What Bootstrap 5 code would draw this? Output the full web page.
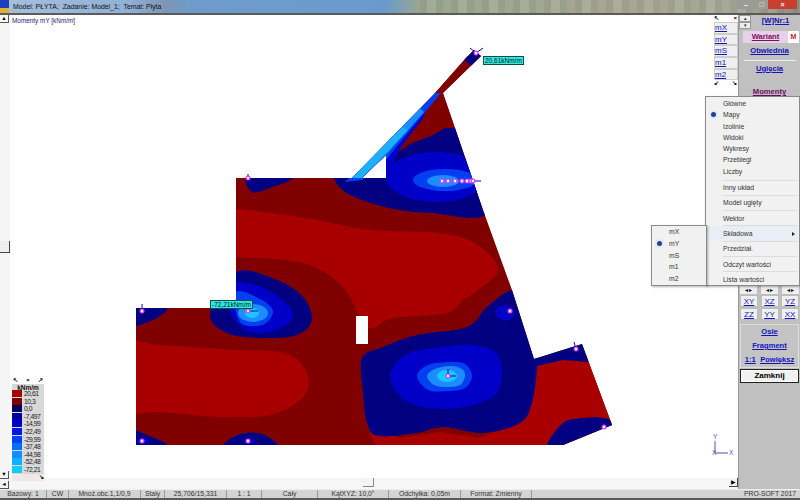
<!DOCTYPE html>
<html lang="en">
<head>
  <meta charset="UTF-8">
  <title>Model: PLYTA</title>
  <link href="https://cdn.jsdelivr.net/npm/bootstrap@5.3.0/dist/css/bootstrap.min.css" rel="stylesheet">
  <style>
    html, body { height: 500px; overflow: hidden; }
    body { font-family: "Liberation Sans", Arial, sans-serif; font-size: 8px; color: #222; background: #fff; }
    .app { width: 800px; height: 500px; position: relative; }
    .titlebar { height: 15px; border-bottom: 2px solid #5a5a5a; font-size: 6.9px; line-height: 13px; color: #111;
      background:
        repeating-linear-gradient(90deg, rgba(90,80,60,.10) 0 7px, rgba(255,255,240,.07) 7px 16px, rgba(60,70,50,.08) 16px 23px, transparent 23px 31px) right / 380px 100% no-repeat,
        linear-gradient(90deg, #a8bfdc 0, #8fb0d6 130px, #7d96b4 165px, #6d9ccc 190px, #6a9acb 385px, #9aa791 420px, #a5a792 600px, #a6a898 735px, #8d8f86 800px); }
    .app-logo { width: 9px; height: 13px; background: linear-gradient(#1c3fc0 60%, #e0b030 60%); }
    .winbtns { margin-right: 3px; height: 9px; }
    .winbtns span { display: flex; align-items: center; justify-content: center; height: 9px; width: 18px; background: #9b9d94; color: #fff; font-size: 7px; line-height: 1; font-weight: 700; }
    .winbtns .maxbtn { width: 13px; }
    .winbtns .closebtn { width: 29px; background: #c8402c; }
    .mainrow { height: 474px; }
    .leftbar { width: 10px; background: #f5f5f5; }
    .sbtn { width: 9px; height: 8px; background: #f6f6f6; border-right: 1px solid #555; border-bottom: 1px solid #555; font-size: 5.5px; line-height: 7px; text-align: center; color: #000; }
    .sbtn + .sbtn { margin-top: 2px; }
    .vthumb { width: 10px; height: 12px; margin-top: 218px; background: #eee; border-right: 1px solid #444; border-bottom: 1px solid #444; }
    .canvasbox { width: 728px; position: relative; background: #fff; }
    .canvasbox svg { display: block; }
    .maptitle { font-size: 6.4px; color: #22226e; position: absolute; left: 2px; top: 1px; }
    .hscroll { height: 11px; background: #f6f6f6; }
    .hthumb { width: 11px; height: 9px; margin-left: 353px; background: #f4f4f4; border-right: 1px solid #888; border-bottom: 1px solid #888; }
    .hend { width: 9px; height: 9px; background: #f4f4f4; border-right: 1px solid #444; border-bottom: 1px solid #444; font-size: 5.5px; line-height: 8px; text-align: center; color: #000; }
    .rightpanel { width: 62px; background: #c0c0c0; border-left: 1px solid #999; font-size: 8px; text-align: center; }
    .rightpanel a { color: #1414b8; font-weight: 700; font-size: 7.6px; }
    .nrrow { height: 16px; padding-bottom: 3px; }
    .tinybtns span { display: block; width: 12px; height: 7px; background: #eee; border: 1px solid #999; font-size: 5px; line-height: 5px; }
    .wariant { background: #e8d0e8; margin-left: 4px; height: 12px; line-height: 12px; }
    .rightpanel .wariant a { color: #7a1060; }
    .mtab { width: 11px; height: 12px; background: #fff; color: #d01030; font-weight: 700; font-size: 7px; line-height: 12px; margin-right: 1px; }
    .navlink { height: 12px; line-height: 12px; }
    .obw { margin-top: 2px; }
    .sepline { height: 1px; background: #eee; margin: 3px 4px 0 5px; }
    .ugi { margin-top: 2px; }
    .mom { margin-top: 11px; }
    .rightpanel .mom a { color: #6a1060; }
    .lowerpanel { position: absolute; left: 739px; top: 286px; width: 61px; height: 203px; }
    .arrows { height: 8px; font-size: 6px; line-height: 8px; color: #000; padding: 0 1px; }
    .arrows span { width: 17px; background: #eee; }
    .viewrow { padding: 0 1px; margin-top: 1px; }
    .viewbtn { width: 18px; height: 12px; line-height: 12px; background: #f0f0f0; border: 1px solid #bbb; }
    .viewbtn a { font-size: 8px; font-weight: 400 !important; }
    .lowergroup { border: 1px solid #ddd; margin: 4px 1px 0; background: #c4c4c4; }
    .lowergroup div { height: 14px; line-height: 14px; }
    .closebutton { background: #f2f2f2; border: 1px solid #222; height: 14px; line-height: 12px; margin: 1px; font-weight: 700; font-size: 8px; color: #000; box-shadow: inset 0 0 0 1px #fff; }
    .statusbar { height: 11px; background: #d4d4d4; border-top: 1px solid #eee; border-bottom: 2px solid #5a5a5a; font-size: 6.8px; line-height: 8px; color: #333; }
    .statusbar div { border-right: 1px solid #999; text-align: center; flex: none; }
    .statusbar div:last-child { border: 0; flex: 1; text-align: right; padding-right: 4px; }
    .sb1 { width: 47px; } .sb2 { width: 22px; } .sb3 { width: 72px; } .sb4 { width: 24px; } .sb5 { width: 62px; }
    .sb6 { width: 35px; } .sb7 { width: 56px; } .sb8 { width: 71px; } .sb9 { width: 72px; } .sb10 { width: 71px; }
    .floatbar { position: absolute; left: 713px; top: 15px; width: 25px; background: #fff; }
    .floatbar .fhead { height: 7px; font-size: 6px; line-height: 7px; font-weight: 700; color: #000; padding: 0 1px; }
    .floatbar .fbtn { height: 11.7px; line-height: 10px; background: #efefef; border: 1px solid #ccc; margin-left: 1px; }
    .floatbar .fbtn a { color: #1414b8; font-size: 8px; }
    .popmenu { position: absolute; background: #f1f1f1; border: 1px solid #8a8a8a; box-shadow: 1px 1px 2px rgba(0,0,0,.3); font-size: 6.8px; color: #333; }
    .mainmenu { left: 705px; top: 96px; width: 95px; height: 190px; padding-top: 1px; }
    .submenu { left: 651px; top: 225px; width: 56px; height: 61px; z-index: 2; }
    .menurow { height: 11.3px; line-height: 11.3px; padding-left: 17px; position: relative; }
    .submenu .menurow { height: 11.8px; line-height: 11.8px; padding-left: 17px; }
    .menusep { height: 1px; background: #dcdcdc; margin: 1.5px 2px 1.5px 17px; }
    .menusep.firstsep { margin-top: 2.5px; }
    .menurow.active { background: #e8eef6; box-shadow: 0 -2px 0 #e8eef6, 0 2px 0 #e8eef6; }
    .dot { position: absolute; left: 5px; top: 3px; width: 5px; height: 5px; border-radius: 50%; background: #23408c; box-shadow: 0 0 0 2px #dfe8f5; }
    .caret-r { position: absolute; right: 4px; top: 4px; border-left: 3px solid #222; border-top: 2px solid transparent; border-bottom: 2px solid transparent; }
    .legendbox { position: absolute; left: 12px; top: 377px; width: 32px; height: 101px; background: #d8d8d8; }
    .legendbox .lhead { height: 7px; line-height: 7px; font-size: 6px; font-weight: 700; color: #000; background: #fff; padding: 0 1px; }
    .legendbox .ltitle { height: 6px; line-height: 7px; font-size: 6.5px; font-weight: 700; text-align: center; color: #111; }
    .legendrow { height: 7.6px; line-height: 7.6px; color: #222; font-size: 6.8px; letter-spacing: -.5px; }
    .swatch { width: 10px; height: 7px; margin-right: 2px; flex: none; }
    .lfoot { height: 7px; line-height: 6px; font-size: 6px; font-weight: 700; text-align: right; color: #000; background: #f0e8e4; }
  </style>
</head>
<body>
<div class="app">

  <div class="titlebar d-flex align-items-start">
    <div class="app-logo"></div>
    <div class="ms-1 flex-grow-1">Model: PŁYTA;&nbsp; Zadanie: Model_1;&nbsp; Temat: Płyta</div>
    <div class="winbtns d-flex">
      <span>&#8211;</span><span class="maxbtn">&#9633;</span><span class="closebtn">&#215;</span>
    </div>
  </div>

  <div class="mainrow d-flex">
    <div class="leftbar d-flex flex-column">
      <div class="sbtn">&#9650;</div>
      <div class="vthumb"></div>
      <div class="flex-grow-1"></div>
      <div class="sbtn">&#9660;</div>
      <div class="sbtn">&#9668;</div>
    </div>

    <div class="canvasbox d-flex flex-column">
      <div class="maptitle">Momenty mY [kNm/m]</div>
      <div class="flex-grow-1">
        <svg id="map" width="728" height="463" viewBox="10 15 728 463"></svg>
      </div>
      <div class="hscroll d-flex justify-content-between">
        <div class="hthumb"></div>
        <div class="hend">&#9654;</div>
      </div>
    </div>

    <div class="rightpanel">
      <div class="nrrow d-flex align-items-start">
        <div class="tinybtns"><span>&#9652;</span><span>&#9662;</span></div>
        <a href="#" class="flex-grow-1">[W]Nr:1</a>
      </div>
      <div class="d-flex">
        <div class="wariant flex-grow-1"><a href="#">Wariant</a></div>
        <div class="mtab">M</div>
      </div>
      <div class="navlink obw"><a href="#">Obwiednia</a></div>
      <div class="sepline"></div>
      <div class="navlink ugi"><a href="#">Ugięcia</a></div>
      <div class="navlink mom"><a href="#">Momenty</a></div>
    </div>
  </div>

  <div class="statusbar d-flex">
    <div class="sb1">Bazowy: 1</div>
    <div class="sb2">CW</div>
    <div class="sb3">Mnoż.obc.1,1/0,9</div>
    <div class="sb4">Stały</div>
    <div class="sb5">25,706/15,331</div>
    <div class="sb6">1 : 1</div>
    <div class="sb7">Cały</div>
    <div class="sb8">KątXYZ: 10,0°</div>
    <div class="sb9">Odchyłka: 0,05m</div>
    <div class="sb10">Format: Zmienny</div>
    <div>PRO-SOFT 2017</div>
  </div>

  <div class="floatbar">
    <div class="fhead d-flex justify-content-between"><span>&#8598;</span><span>&#215;</span></div>
    <div class="fbtn"><a href="#">mX</a></div>
    <div class="fbtn"><a href="#">mY</a></div>
    <div class="fbtn"><a href="#">mS</a></div>
    <div class="fbtn"><a href="#">m1</a></div>
    <div class="fbtn"><a href="#">m2</a></div>
    <div class="fhead d-flex justify-content-between"><span>&#8601;</span><span>&#8600;</span></div>
  </div>

  <div class="lowerpanel rightpanel border-0">
    <div class="arrows d-flex justify-content-between"><span>&#9666; &#9656;</span><span>&#9666; &#9656;</span><span>&#9666; &#9656;</span></div>
    <div class="viewrow d-flex justify-content-between"><div class="viewbtn"><a href="#">XY</a></div><div class="viewbtn"><a href="#">XZ</a></div><div class="viewbtn"><a href="#">YZ</a></div></div>
    <div class="viewrow d-flex justify-content-between"><div class="viewbtn"><a href="#">ZZ</a></div><div class="viewbtn"><a href="#">YY</a></div><div class="viewbtn"><a href="#">XX</a></div></div>
    <div class="lowergroup">
      <div><a href="#">Osie</a></div>
      <div><a href="#">Fragment</a></div>
      <div><a href="#">1:1</a>&nbsp; <a href="#">Powiększ</a></div>
    </div>
    <div class="closebutton">Zamknij</div>
  </div>

  <div class="popmenu mainmenu">
    <div class="menurow">Główne</div>
    <div class="menurow"><span class="dot"></span>Mapy</div>
    <div class="menurow">Izolinie</div>
    <div class="menurow">Widoki</div>
    <div class="menurow">Wykresy</div>
    <div class="menurow">Przebiegi</div>
    <div class="menurow">Liczby</div>
    <div class="menusep firstsep"></div>
    <div class="menurow">Inny układ</div>
    <div class="menusep"></div>
    <div class="menurow">Model ugięty</div>
    <div class="menusep"></div>
    <div class="menurow">Wektor</div>
    <div class="menusep"></div>
    <div class="menurow active">Składowa<span class="caret-r"></span></div>
    <div class="menusep"></div>
    <div class="menurow">Przedział.</div>
    <div class="menusep"></div>
    <div class="menurow">Odczyt wartości</div>
    <div class="menusep"></div>
    <div class="menurow">Lista wartości</div>
  </div>

  <div class="popmenu submenu">
    <div class="menurow">mX</div>
    <div class="menurow"><span class="dot"></span>mY</div>
    <div class="menurow">mS</div>
    <div class="menurow">m1</div>
    <div class="menurow">m2</div>
  </div>

  <div class="legendbox" id="legend">
    <div class="lhead d-flex justify-content-between"><span>&#8598;</span><span>&#215;</span><span>&#8599;</span></div>
    <div class="ltitle">kNm/m</div>
  </div>

</div>

<script>
// legend values + colours
const legendData = [
  ['20,61', '#a80000'], ['10,3', '#800000'], ['0,0', '#000060'], ['-7,497', '#0000a0'],
  ['-14,99', '#0000c8'], ['-22,49', '#0018e8'], ['-29,99', '#0040ff'], ['-37,48', '#0070ff'],
  ['-44,98', '#1090ff'], ['-52,48', '#10b0ff'], ['-72,21', '#10ccff']
];
const legend = document.getElementById('legend');
legendData.forEach(([val, col]) => {
  const row = document.createElement('div');
  row.className = 'legendrow d-flex';
  row.innerHTML = `<span class="swatch" style="background:${col}"></span><span>${val}</span>`;
  legend.appendChild(row);
});
const foot = document.createElement('div');
foot.className = 'lfoot';
foot.innerHTML = '&#8600;';
legend.appendChild(foot);

const NAVY = '#000080', BLUE1 = '#0000c8', BLUE2 = '#0040f0', BLUE3 = '#1c8cff', CYAN = '#18c8ff';
const DARK = '#800000', LIGHT = '#a80000';

const outlineFull = 'M136,308 L236,308 L236,178 L352,178 L435,93 L466,58 L474,50 L481,56 L443,93 L455,128 L483,210 L512,290 L534,359 L582,344 L612,425 L563,445 L136,445 Z M362,178 L386,155 L386,178 Z';

function smooth(pts) {
  // closed catmull-rom
  let d = `M${pts[0][0]},${pts[0][1]} `;
  const n = pts.length;
  for (let i = 0; i < n; i++) {
    const p0 = pts[(i - 1 + n) % n], p1 = pts[i], p2 = pts[(i + 1) % n], p3 = pts[(i + 2) % n];
    const c1 = [p1[0] + (p2[0] - p0[0]) / 6, p1[1] + (p2[1] - p0[1]) / 6];
    const c2 = [p2[0] - (p3[0] - p1[0]) / 6, p2[1] - (p3[1] - p1[1]) / 6];
    d += `C${c1[0]},${c1[1]} ${c2[0]},${c2[1]} ${p2[0]},${p2[1]} `;
  }
  return d + 'Z';
}
const blob = (pts, fill) => `<path d="${smooth(pts)}" fill="${fill}"/>`;
const ell = (cx, cy, rx, ry, fill) => `<ellipse cx="${cx}" cy="${cy}" rx="${rx}" ry="${ry}" fill="${fill}"/>`;
const poly = (pts, fill) => `<polygon points="${pts}" fill="${fill}"/>`;

let s = `<defs><clipPath id="plate"><path clip-rule="evenodd" d="${outlineFull}"/></clipPath></defs>`;
s += `<g clip-path="url(#plate)">`;
s += `<rect x="130" y="45" width="490" height="405" fill="${DARK}"/>`;

// light red bands
s += blob([[200,209],[236,209],[263,212],[317,220],[370,230],[440,233],[478,245],[498,270],[478,290],[463,300],[447,313],[393,318],[367,327],[343,287],[303,263],[236,257],[200,255]], LIGHT);
s += blob([[110,342],[160,345],[240,350],[280,352],[300,362],[309,382],[300,400],[270,415],[220,417],[160,412],[110,410]], LIGHT);
s += poly('534,359 590,355 620,430 560,450 520,450 530,400', LIGHT);
s += poly('367,425 375,445 550,445 530,415 480,438 440,432 400,438', LIGHT);

// big navy zone lower centre
s += blob([[512,290],[487,307],[467,327],[417,335],[383,347],[362,358],[363,392],[367,423],[378,436],[417,433],[443,427],[483,433],[520,423],[532,403],[537,367],[536,345],[525,300]], NAVY);
s += poly('534,359 582,342 590,362 563,360 537,366', NAVY);
s += blob([[547,447],[563,423],[583,418],[603,418],[615,425],[570,450]], NAVY);
s += blob([[495,311],[505,305],[514,310],[512,318],[502,320]], BLUE1);

// centre of the big spot
s += blob([[390,377],[405,355],[440,347],[470,345],[495,352],[502,372],[495,395],[465,407],[430,408],[405,400]], BLUE1);
s += blob([[417,376],[428,365],[450,362],[465,364],[472,376],[465,388],[448,391],[428,390]], BLUE2);
s += blob([[427,376],[435,369],[450,366],[462,369],[465,376],[460,385],[447,387],[434,385]], BLUE3);
s += ell(447, 376, 10, 6, CYAN);

// left spot
s += blob([[210,313],[236,272],[277,280],[303,297],[312,320],[297,335],[263,338],[227,333]], NAVY);
s += blob([[225,300],[236,282],[268,290],[293,313],[277,330],[245,330]], BLUE1);
s += blob([[236,292],[262,300],[273,312],[262,325],[240,322]], BLUE2);
s += ell(253, 313, 15, 9, BLUE3);
s += ell(252, 313, 7, 5, CYAN);

// corner spots
s += blob([[130,306],[166,308],[160,316],[148,322],[130,326]], NAVY);
s += blob([[248,176],[292,178],[270,188],[252,192]], NAVY);
s += blob([[130,430],[150,436],[166,445],[130,446]], NAVY);
s += blob([[225,447],[240,434],[262,434],[276,447]], NAVY);
s += ell(143, 441, 6, 3, BLUE1);
s += ell(249, 441, 6, 3, BLUE1);

// upper triangle
s += blob([[335,172],[345,192],[385,207],[430,213],[490,211],[470,130],[455,128],[433,135],[412,143],[397,152],[370,170]], NAVY);
s += poly('435,93 433,97 422,120 410,135 398,152 386,178 380,160', BLUE1);
s += poly('435,93 443,93 455,128 433,135 412,143 398,152 410,135 422,120 433,97', DARK);
s += poly('445,128 455,128 458,139 415,148 433,135', NAVY);
s += ell(436, 177, 50, 25, BLUE1);
s += ell(445, 180, 32, 11, BLUE2);
s += ell(443, 181, 16, 6, BLUE3);

// diagonal band and beam
s += poly('345,182 435,93 441,93 398,145 386,160 362,180', BLUE2);
s += poly('351,178 420,108 424,112 386,155 362,178', BLUE3);
s += poly('352,178 402,127 408,130 362,178', '#1cb0ff');
s += poly('435,93 466,56 482,56 443,93', DARK);
s += poly('464,60 474,48 483,55 472,66', NAVY);
s += `</g>`;

// white opening
s += `<rect x="356" y="316" width="12" height="28" fill="#fff"/>`;

// markers
const dots = [[142,311],[248,178],[248,311],[142,441],[248,441],[510,311],[576,349],[604,427],[448,376],[476,53],
  [442,181],[448,181],[455,181],[462,181],[467,181],[471,181],[473,181]];
const ticks = [[142,311,142,304],[248,178,248,174],[248,311,258,311],[448,376,448,369],[448,376,456,376],[473,181,481,181],[576,349,574,342],[604,427,602,420],[476,53,470,48],[476,53,483,48]];
ticks.forEach(t => { s += `<line x1="${t[0]}" y1="${t[1]}" x2="${t[2]}" y2="${t[3]}" stroke="#0000c0" stroke-width="1"/>`; });
dots.forEach(d => {
  s += `<circle cx="${d[0]}" cy="${d[1]}" r="2.5" fill="#e040f0"/><circle cx="${d[0]}" cy="${d[1]}" r="1.2" fill="#fff"/>`;
});

// value tags
s += `<rect x="483.5" y="56.5" width="40" height="8" fill="#30e8e0" stroke="#005050"/>`;
s += `<text x="485" y="63" font-size="6.5" font-family="Liberation Sans" fill="#111">20,61kNm/m</text>`;
s += `<rect x="210.5" y="300.5" width="42" height="8" fill="#30e8e0" stroke="#005050"/>`;
s += `<text x="212" y="307" font-size="6.5" font-family="Liberation Sans" fill="#111">-72,21kNm/m</text>`;

// axes
s += `<g stroke="#5050b0" fill="none"><line x1="715" y1="441" x2="715" y2="453"/><line x1="715" y1="453" x2="728" y2="453"/></g>`;
s += `<g font-size="6.5" font-family="Liberation Sans" fill="#5050b0"><text x="713" y="439">Y</text><text x="729" y="455">X</text><text x="712" y="455">X</text></g>`;
document.getElementById('map').innerHTML = s;
</script>
<script src="https://cdn.jsdelivr.net/npm/bootstrap@5.3.0/dist/js/bootstrap.bundle.min.js"></script>
</body>
</html>
